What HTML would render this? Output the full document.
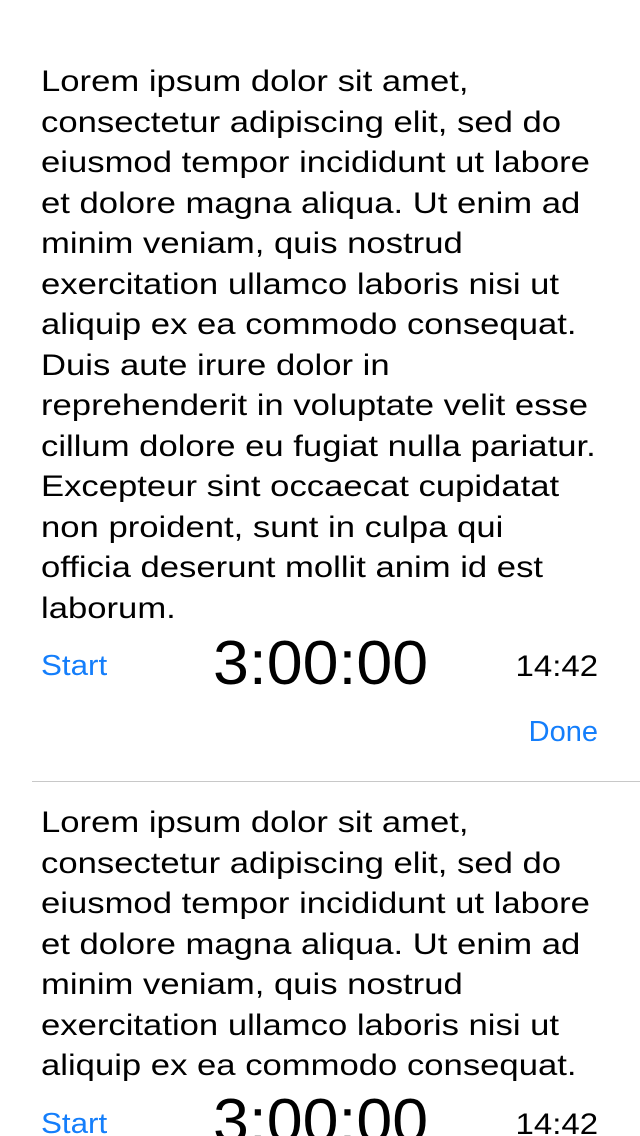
<!DOCTYPE html>
<html><head><meta charset="utf-8"><style>
html,body{margin:0;padding:0;background:#fff;width:640px;height:1136px;overflow:hidden;position:relative;font-family:"Liberation Sans",Arial,sans-serif;}
.t{position:absolute;left:41px;font-size:30px;line-height:40.5px;color:#000;white-space:nowrap;transform:scaleX(1.155);transform-origin:0 0;}
.a{position:absolute;white-space:nowrap;line-height:1;}
.blue{color:#147efb;}
</style></head><body>
<div class="t" style="top:62px">Lorem ipsum dolor sit amet,<br>consectetur adipiscing elit, sed do<br>eiusmod tempor incididunt ut labore<br>et dolore magna aliqua. Ut enim ad<br>minim veniam, quis nostrud<br>exercitation ullamco laboris nisi ut<br>aliquip ex ea commodo consequat.<br>Duis aute irure dolor in<br>reprehenderit in voluptate velit esse<br>cillum dolore eu fugiat nulla pariatur.<br>Excepteur sint occaecat cupidatat<br>non proident, sunt in culpa qui<br>officia deserunt mollit anim id est<br>laborum.</div>
<div class="a blue" style="left:41px;top:652px;font-size:29px;transform:scaleX(1.08);transform-origin:0 0">Start</div>
<div class="a" style="left:213px;top:633px;font-size:62px;transform:scaleX(1.04);transform-origin:0 0">3:00:00</div>
<div class="a" style="right:42px;top:652px;font-size:30px;transform:scaleX(1.1);transform-origin:100% 0">14:42</div>
<div class="a blue" style="right:42px;top:718px;font-size:29px">Done</div>
<div style="position:absolute;left:32px;right:0;top:781px;height:1px;background:#c8c8c8"></div>
<div class="t" style="top:803px">Lorem ipsum dolor sit amet,<br>consectetur adipiscing elit, sed do<br>eiusmod tempor incididunt ut labore<br>et dolore magna aliqua. Ut enim ad<br>minim veniam, quis nostrud<br>exercitation ullamco laboris nisi ut<br>aliquip ex ea commodo consequat.</div>
<div class="a blue" style="left:41px;top:1110px;font-size:29px;transform:scaleX(1.08);transform-origin:0 0">Start</div>
<div class="a" style="left:213px;top:1091px;font-size:62px;transform:scaleX(1.04);transform-origin:0 0">3:00:00</div>
<div class="a" style="right:42px;top:1110px;font-size:30px;transform:scaleX(1.1);transform-origin:100% 0">14:42</div>
</body></html>
